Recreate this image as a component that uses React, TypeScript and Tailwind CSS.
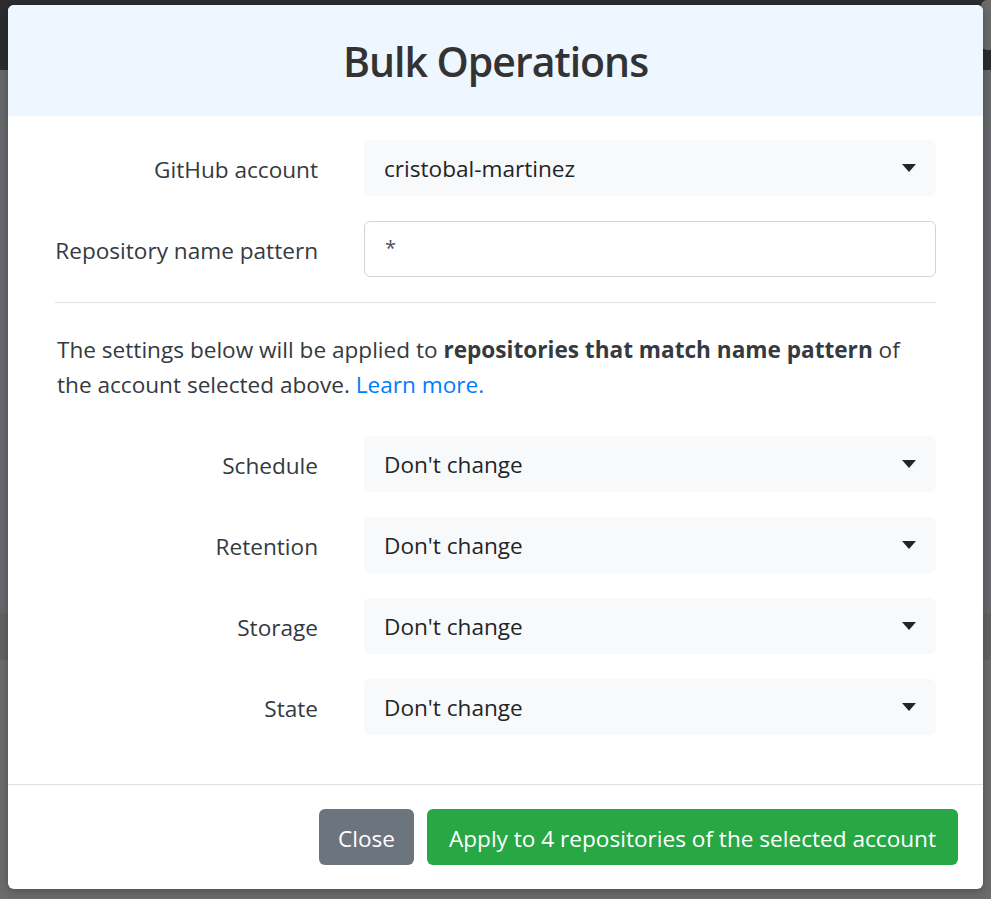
import React from 'react';

const font = { fontFamily: '"Open Sans", "Noto Sans", sans-serif' };

const Caret = () => (
  <svg width="14" height="8" viewBox="0 0 14 8" className="shrink-0">
    <path d="M0 0 L14 0 L7 8 Z" fill="#212529" />
  </svg>
);

const SelectBox: React.FC<{ value: string }> = ({ value }) => (
  <div className="flex-1 h-[56px] bg-[#f8f9fa] rounded-[6px] flex items-center justify-between pl-[20px] pr-[20px] text-[22.6px] text-[#212529]">
    <span className="mt-[2px]">{value}</span>
    <Caret />
  </div>
);

const Row: React.FC<{ label: string; children: React.ReactNode }> = ({ label, children }) => (
  <div className="flex items-center">
    <label className="w-[263px] text-right text-[22.6px] text-[#343a40] shrink-0 mt-[3px]">{label}</label>
    <div className="ml-[46px] flex-1 flex">{children}</div>
  </div>
);

export default function App() {
  return (
    <div className="relative w-full h-[899px] overflow-hidden bg-[#6b6b6b]" style={font}>
      {/* dimmed page behind the modal */}
      <div className="flex flex-col h-full">
        <div className="h-[70px] bg-[#2b2c2f] flex justify-end items-start">
          <div className="w-[30px] h-[50px] mr-[-20px] rounded-[6px] bg-[#6b6b6b]" />
        </div>
        <div className="h-[543px] bg-[#66676a]" />
        <div className="h-[47px] bg-[#5f6163]" />
        <div className="flex-1 bg-[#6b6b6b]" />
      </div>

      {/* modal */}
      <div className="absolute left-[8px] top-[5px] w-[975px] bg-white rounded-[6px] overflow-hidden shadow-[0_2px_8px_rgba(0,0,0,0.25)]">
        <div className="h-[111px] bg-[#eef6ff] flex items-center justify-center">
          <h1 className="text-[41px] font-semibold text-[#333333] tracking-[-1px] mt-[2px]">Bulk Operations</h1>
        </div>

        <div className="px-[47px] pt-[24px] pb-[49px]">
          <div className="flex flex-col gap-[25px]">
            <Row label="GitHub account">
              <SelectBox value="cristobal-martinez" />
            </Row>
            <Row label="Repository name pattern">
              <div className="flex-1 h-[56px] bg-white border border-[#ced4da] rounded-[6px] flex items-center pl-[20px] text-[20px] text-[#495057]">
                <span className="mb-[2px]">*</span>
              </div>
            </Row>
          </div>

          <hr className="mt-[25px] border-0 border-t border-[#dee2e6]" />

          <p className="mt-[29px] text-[22.6px] leading-[35px] text-[#343a40] pl-[2px]">
            The settings below will be applied to <b className="font-bold">repositories that match name pattern</b> of
            <br />
            the account selected above. <a className="text-[#007bff]">Learn more.</a>
          </p>

          <div className="mt-[34px] flex flex-col gap-[25px]">
            <Row label="Schedule">
              <SelectBox value="Don't change" />
            </Row>
            <Row label="Retention">
              <SelectBox value="Don't change" />
            </Row>
            <Row label="Storage">
              <SelectBox value="Don't change" />
            </Row>
            <Row label="State">
              <SelectBox value="Don't change" />
            </Row>
          </div>
        </div>

        <div className="border-t border-[#dee2e6] flex justify-end gap-[13px] pr-[25px] py-[24px]">
          <button className="h-[56px] px-[19px] pt-[3px] bg-[#6c757d] text-white text-[22.6px] rounded-[6px]">Close</button>
          <button className="h-[56px] px-[22px] pt-[3px] bg-[#28a745] text-white text-[22.6px] rounded-[6px]">
            Apply to 4 repositories of the selected account
          </button>
        </div>
      </div>
    </div>
  );
}
